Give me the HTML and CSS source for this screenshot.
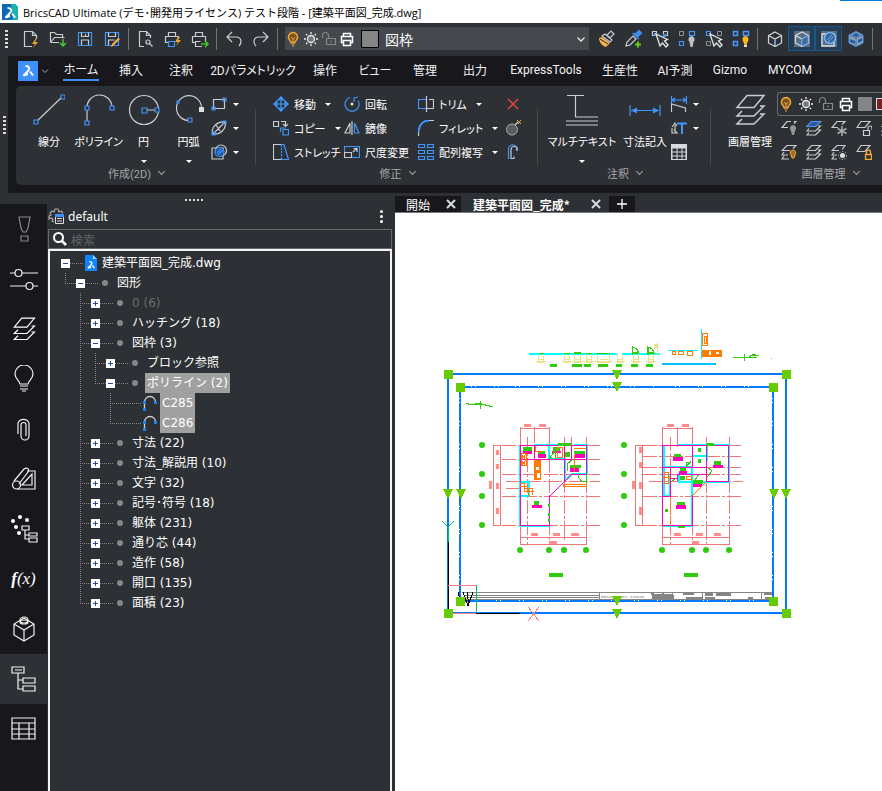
FILE: index.html
```html
<!DOCTYPE html>
<html lang="ja">
<head>
	<meta charset="UTF-8">
	<meta name="viewport" content="width=device-width, initial-scale=1.0">
	<title>BricsCAD Ultimate</title>
	<link rel="stylesheet" href="styles.css">
</head>
<body>
	<!-- 共通アイコン -->
	<svg class="defs" aria-hidden="true">
		<symbol id="bulb" viewBox="0 0 16 16"><path d="M8 1.5a4.6 4.6 0 0 0-3 8l1 2h4l1-2a4.6 4.6 0 0 0-3-8z" fill="#7b521c" stroke="#e8a33d" stroke-width="1.5"/><path d="M6 6l2 2 2-2M8 8v3M6 13h4M7 15h2" stroke="#e8a33d" fill="none"/></symbol>
		<symbol id="sun" viewBox="0 0 16 16"><circle cx="8" cy="8" r="3.5" fill="#777" stroke="#eee" stroke-width="1.3"/><path d="M8 1v2M8 13v2M1 8h2M13 8h2M3 3l1.4 1.4M11.6 11.6L13 13M3 13l1.4-1.4M11.6 4.4L13 3" stroke="#eee" stroke-width="1.3"/></symbol>
		<symbol id="lock" viewBox="0 0 16 16"><path d="M5.5 7.500h9v6h-9zM7.500 7V4.500a2.500 2.500 0 0 0-6 0V7M10 9.500v2" fill="none" stroke="#85878a" stroke-width="1.200"/></symbol>
		<symbol id="printer" viewBox="0 0 16 16"><path d="M4.500 5V2.500h7V5M4 11.500H2.500v-6h11v6H12M4.500 9.500h7v5h-7z" fill="none" stroke="#fff" stroke-width="1.500"/></symbol>
		<symbol id="poly" viewBox="0 0 16 16"><path d="M2.500 14V7a5 5 0 0 1 11 0" fill="none" stroke="#d0d0d2" stroke-width="1.300"/><path d="M1 6h3v3H1zM12 6h3v3h-3zM1 13h3v3H1z" fill="#1e80e8"/></symbol>
		<symbol id="cube" viewBox="0 0 16 16"><path d="M8 1l6.500 3.500v7.500L8 15.500 1.500 12V4.500zM1.500 4.500L8 8l6.500-3.500M8 8v7.500" fill="none" stroke="#d8d8da" stroke-width="1.200"/></symbol>
		<symbol id="layers" viewBox="0 0 32 32"><path d="M13 1.500h17l-10 12H3zM26 12h4L20 22H3l5-5M26 20h4L20 30H3l5-5" fill="none" stroke="currentColor" stroke-width="1.500"/></symbol>
		<symbol id="sheet" viewBox="0 0 16 16"><path d="M5 1.500h9l-5 6H1z" fill="none" stroke="#c9c9cc" stroke-width="1.200"/></symbol>
		<symbol id="sheets" viewBox="0 0 16 16"><path d="M5.500 1.500h9l-5 5H1zM12 6h2.500l-5 5H1l2-2.500M12 10h2.500l-5 5H1l2-2.500" fill="none" stroke="#c9c9cc" stroke-width="1.200"/></symbol>
		<symbol id="squares" viewBox="0 0 20 20"><path d="M2.500 2.500h4v4h-4zM12.500 2.500h5v4h-5zM2.500 12.500h4v4h-4z" fill="none" stroke="#4a98ff" stroke-width="1.500"/></symbol>
		<symbol id="pointer" viewBox="0 0 20 20"><path d="M6 5l4 12 2.500-3 3.500 4 2-2-3.500-4 3-1.500z" fill="#33363a" stroke="#e4e4e6" stroke-width="1.300"/></symbol>
		<symbol id="close" viewBox="0 0 12 12"><path d="M2 2l8 8M10 2l-8 8" stroke="#d5dbe2" stroke-width="2"/></symbol>
		<symbol id="mark" viewBox="0 0 12 12"><path d="M3.500 1c4 0 5 2.500 2.500 5L1.500 10.500 6 9" fill="none" stroke="#fff" stroke-width="2"/><path d="M8 6.500l3 4" stroke="#fff" stroke-width="2"/></symbol>
	</svg>

	<header class="titlebar">
		<svg class="app-icon" viewBox="0 0 16 16"><path d="M0 0h13l3 3v13H0z" fill="#0b67b8"/><path d="M9 0h4l3 3v13h-5z" fill="#18b4b0"/><use href="#mark" x="2" y="3" width="12" height="12"/></svg>
		<h1>BricsCAD Ultimate (デモ･開発用ライセンス) テスト段階 - [建築平面図_完成.dwg]</h1>
		<span class="accent"></span>
	</header>

	<div class="quickbar">
		<span class="grip-v"></span>
		<button class="qbtn" aria-label="新規"><svg viewBox="0 0 20 20"><path d="M11 17.500H3.500v-15h8l4 4V10M11.500 2.500v4h4" class="g"/><path d="M15 9l-4 6h3l-2 4 5-6h-3l2-4z" fill="#f3a02f"/></svg></button>
		<button class="qbtn" aria-label="開く"><svg viewBox="0 0 20 20"><path d="M3 13.500h8M2.500 13.500v-10h4l2 2h6v3h-8l-4 5M14.500 8.500h2" class="g"/><path d="M15 10v7M12 14l3 3 3-3" stroke="#43c832" fill="none" stroke-width="1.500"/></svg></button>
		<button class="qbtn" aria-label="保存"><svg viewBox="0 0 20 20"><path d="M3.500 3.500h13v13h-13z" class="b"/><path d="M6.500 3.500v4h7v-4M6.500 16v-5h7v5M10.500 5v2" class="g"/></svg></button>
		<button class="qbtn" aria-label="別名保存"><svg viewBox="0 0 20 20"><path d="M3.500 3.500h13v13h-13z" class="b"/><path d="M6.500 3.500v4h7v-4M6.500 16v-5h6" class="g"/><path d="M18 10l-7 7-2 1 1-3 6-6z" fill="#f4b455"/></svg></button>
		<span class="sep"></span>
		<button class="qbtn" aria-label="プレビュー"><svg viewBox="0 0 20 20"><path d="M8 17.500H3.500v-15h7l4 4V9M10.500 2.500v4h4" class="g"/><circle cx="12" cy="13" r="2" class="g"/><path d="M13.500 14.500l3 3" class="g"/></svg></button>
		<button class="qbtn" aria-label="印刷"><svg viewBox="0 0 20 20"><path d="M5.500 8V3.500h7V8M5 13.500H2.500v-6h13V10" class="g"/><path d="M5.500 12.500h6v5h-6z" class="b"/><path d="M15 8l-3 5h3l-2 4 5-6h-3l2-3z" fill="#f3a02f"/></svg></button>
		<button class="qbtn" aria-label="パブリッシュ"><svg viewBox="0 0 20 20"><path d="M5.500 8V3.500h7V8M5 13.500H2.500v-6h13V12M12 17.500H5.500v-5h5" class="g"/><path d="M11 15h7M15 12l3 3-3 3" stroke="#43c832" fill="none" stroke-width="1.500"/></svg></button>
		<span class="sep"></span>
		<button class="qbtn" aria-label="元に戻す"><svg viewBox="0 0 20 20"><path d="M8 3L3 8l5 5M3 8h9c6 0 6 6 3 9" class="g"/></svg></button>
		<button class="qbtn" aria-label="やり直し"><svg viewBox="0 0 20 20"><path d="M12 3l5 5-5 5M17 8H8c-6 0-6 6-3 9" class="g"/></svg></button>
		<span class="sep"></span>
		<div class="layer-combo">
			<svg><use href="#bulb"/></svg><svg><use href="#sun"/></svg><svg><use href="#lock"/></svg><svg><use href="#printer"/></svg>
			<span class="swatch"></span>
			<select aria-label="画層"><option>図枠</option></select>
			<svg class="chev" viewBox="0 0 16 16"><path d="M4.500 6.500L8 10l3.500-3.500" stroke="#e8e8e8" fill="none" stroke-width="1.300"/></svg>
		</div>
		<button class="qbtn" aria-label="プロパティコピー"><svg viewBox="0 0 20 20"><path d="M11 6l3 3 4-4-3-3zM9 5l7 6-2 2-8-6z" class="g"/><path d="M3 9l3-1 8 6-4 4c-4-1-7-5-7-9z" fill="#f5b04a"/><path d="M4 10l8 5" stroke="#2d3034"/></svg></button>
		<button class="qbtn" aria-label="スポイト"><svg viewBox="0 0 20 20"><path d="M3 17l1-4 6-6 3 3-6 6z" class="g"/><path d="M10 4l6 6M12 6l4-4 2 2-4 4z" stroke="#3d8cf0" fill="#3d8cf0" stroke-width="2"/><path d="M12 15.500h6M15 12.500v6" stroke="#5bcc12" stroke-width="2"/></svg></button>
		<button class="qbtn" aria-label="選択"><svg viewBox="0 0 20 20"><path d="M2.500 2.500h4v4h-4zM13.500 2.500h4v4h-4z" class="g"/><path d="M13 5h3v3h-3zM4 4h3v3H4z" fill="#3d8cf0"/><use href="#pointer"/></svg></button>
		<button class="qbtn" aria-label="選択表示"><svg viewBox="0 0 20 20"><path d="M2.500 2.500h4v4h-4z" stroke="#909195" fill="none"/><path d="M12.500 2.500h5v4h-5zM2.500 12.500h4v4h-4z" class="b"/><path d="M14.500 7a3.500 3.500 0 0 0-2 6l1 5h2l1-5a3.500 3.500 0 0 0-2-6z" fill="#bfc0c2"/></svg></button>
		<button class="qbtn" aria-label="選択分離"><svg viewBox="0 0 20 20"><path d="M2.500 2.500h4v4h-4z" class="b"/><path d="M13.500 2.500h4v4h-4zM2.500 12.500h4v4h-4z" stroke="#909195" fill="none"/><use href="#pointer"/></svg></button>
		<button class="qbtn" aria-label="全表示"><svg viewBox="0 0 20 20"><use href="#squares"/><path d="M14.500 7a3.500 3.500 0 0 0-2 6l1 3h2l1-3a3.500 3.500 0 0 0-2-6z" fill="#ffb81c"/><path d="M13 16h3v2h-3z" fill="#ddd"/></svg></button>
		<span class="sep"></span>
		<button class="qbtn view" aria-label="ワイヤフレーム"><svg viewBox="0 0 16 16"><use href="#cube"/><path d="M8 8v7" stroke="#4a98ff"/></svg></button>
		<button class="qbtn view on" aria-label="シェーディング"><svg viewBox="0 0 16 16"><rect width="16" height="16" fill="#587085"/><use href="#cube"/><path d="M8 8v7l6-3V5z" fill="#46688c" stroke="#4a98ff"/></svg></button>
		<button class="qbtn view on" aria-label="ハッチ表示"><svg viewBox="0 0 16 16"><rect width="16" height="16" fill="#587085"/><path d="M1 3h12v12H1z" fill="none" stroke="#ddd" stroke-width="1.300"/><circle cx="9" cy="7" r="5.500" fill="#386797" stroke="#78b4f4" stroke-width="1.500"/><path d="M6 9l5-5M7 11l5-5" stroke="#63a9f7"/></svg></button>
		<button class="qbtn view" aria-label="ソリッド"><svg viewBox="0 0 16 16"><path d="M8 .5l7 3.500v8l-7 3.500L1 12V4z" fill="#969ba1" stroke="#4a98ff"/><path d="M1 4l7 3 7-3M8 7v8" stroke="#337bd2" fill="none"/><path d="M4 4l4-2 4 2-4 2zM2 8l5 2v3l-5-2zM10 9l4-2v3l-4 2z" fill="#1e5fa8"/></svg></button>
		<span class="sep"></span>
	</div>

	<section class="ribbon">
		<div class="ribbon-edge"><span class="grip-v"></span></div>
		<div class="ribbon-main">
			<nav class="tabs">
				<button class="app-btn" aria-label="アプリケーション"><svg viewBox="0 0 20 20"><rect width="20" height="20" fill="#3f91ff"/><use href="#mark" x="4" y="4" width="12" height="12"/></svg><svg class="chev" viewBox="0 0 8 8"><path d="M1 2.500l3 3 3-3" stroke="#aaa" fill="none"/></svg></button>
				<a href="#" class="current">ホーム</a><a href="#">挿入</a><a href="#">注釈</a><a href="#">2Dパラメトリック</a><a href="#">操作</a><a href="#">ビュー</a><a href="#">管理</a><a href="#">出力</a><a href="#">ExpressTools</a><a href="#">生産性</a><a href="#">AI予測</a><a href="#">Gizmo</a><a href="#">MYCOM</a>
			</nav>
			<div class="panels">
				<div class="panel">
					<div class="tools draw">
						<button class="big"><svg viewBox="0 0 32 32"><path d="M3 28L29 3" class="g"/><path d="M1 26h4v4H1zM28 1h4v4h-4z" class="b k"/></svg><span>線分</span></button>
						<button class="big"><svg viewBox="0 0 32 32"><path d="M4 29V14a12 12 0 0 1 25-1" class="g"/><path d="M2 12h4v4H2zM2 27h4v4H2zM27 12h4v4h-4z" class="b k"/></svg><span>ポリライン</span></button>
						<button class="big"><svg viewBox="0 0 32 32"><circle cx="16" cy="16" r="14.500" class="g"/><path d="M16 16h14" class="g"/><path d="M14 14h5v5h-5zM27 14h4v4h-4z" class="b k"/></svg><span>円</span><i class="drop"></i></button>
						<button class="big"><svg viewBox="0 0 32 32"><path d="M17 26.500A12.500 12.500 0 1 1 28.500 14" class="g"/><path d="M15 24h4v4h-4zM4 7h2v2H4z" class="b k"/><path d="M26 13h5v5h-5z" fill="#e0e0e0"/></svg><span>円弧</span><i class="drop"></i></button>
						<div class="stack">
							<button class="small" aria-label="矩形"><svg viewBox="0 0 16 16"><path d="M2.500 3.500h11v9h-11z" class="g"/><path d="M1 11h3v3H1zM12 2h3v3h-3z" class="b"/></svg><i class="drop"></i></button>
							<button class="small" aria-label="楕円"><svg viewBox="0 0 16 16"><path d="M2 14C-1 7 7 1 14 2c2 7-5 13-12 12zL14 2M5 5l4 6" class="g"/><path d="M1 12h3v3H1zM12 1h3v3h-3z" class="b"/></svg><i class="drop"></i></button>
							<button class="small" aria-label="ハッチング"><svg viewBox="0 0 16 16"><path d="M1 4h11v11H1z" class="g"/><circle cx="10" cy="6.500" r="5.500" class="g"/><circle cx="8.500" cy="8" r="4.500" class="b hatch"/><path d="M6 9l4-4M7 11l5-5" class="b"/></svg><i class="drop"></i></button>
						</div>
					</div>
					<button class="caption">作成(2D)<i class="caret"></i></button>
				</div>

				<div class="panel">
					<div class="tools modify">
						<button class="small"><svg viewBox="0 0 16 16"><path d="M8 0v16M0 8h16M8 1L5 4h6zM8 15l-3-3h6zM1 8l3-3v6zM15 8l-3-3v6z" class="b"/></svg>移動<i class="drop"></i></button>
						<button class="small"><svg viewBox="0 0 16 16"><path d="M6 1.500a7 7 0 1 0 8 3" class="b"/><path d="M14 1l-4 1v4" class="b"/><circle cx="8" cy="8" r="1.500" fill="#ddd"/></svg>回転</button>
						<button class="small"><svg viewBox="0 0 16 16"><path d="M8 3.500H.5v9H8" class="b"/><path d="M8.500 0v16M11 3.500h4.500v9H9" class="g"/></svg>トリム<i class="drop"></i></button>
						<button class="small" aria-label="削除"><svg viewBox="0 0 16 16"><path d="M3 3l10 10M13 3L3 13" stroke="#e0493f" stroke-width="1.500"/></svg></button>
						<button class="small"><svg viewBox="0 0 16 16"><path d="M.5 1.500h5v5h-5zM8 1.500h4.500V6M10 4l2.500 2.500L15 4" class="g"/><path d="M10 9.500h5.500v5.500H10zM7.500 12v-4h5" class="b"/></svg>コピー<i class="drop"></i></button>
						<button class="small"><svg viewBox="0 0 16 16"><path d="M6 3v10H1zM8 1v14" class="g"/><path d="M10.500 3v10H15z" class="b"/></svg>鏡像</button>
						<button class="small"><svg viewBox="0 0 16 16"><path d="M.5 16v-4M11 .5h5" class="g"/><path d="M.5 12C1 5 5 .5 11 .5" class="b fat"/></svg>フィレット<i class="drop"></i></button>
						<button class="small" aria-label="分解"><svg viewBox="0 0 16 16"><circle cx="7" cy="9.500" r="5.500" fill="#5b5d60" stroke="#aaa"/><path d="M10 5l3-3" class="g"/><path d="M12 0l4 4M16 0l-3 4" stroke="#e8a33d"/></svg></button>
						<button class="small"><svg viewBox="0 0 16 16"><path d="M8 .5H.5v15H8" class="g"/><path d="M8 .5h3l4.500 15H8" class="b"/><path d="M8.500 1v14" class="b" stroke-dasharray="2 1"/></svg>ストレッチ</button>
						<button class="small"><svg viewBox="0 0 16 16"><path d="M.5 8V2.500h15v11H8" class="b"/><path d="M.5 8.500h7v5h-7zM9 8l4-4M9.500 4.500H13V8" class="g"/></svg>尺度変更</button>
						<button class="small"><svg viewBox="0 0 16 16"><path d="M.5.5h6v3h-6zM9.500.5h6v3h-6zM.5 6.500h6v3h-6zM9.500 6.500h6v3h-6zM.5 12.500h6v3h-6zM9.500 12.500h6v3h-6z" class="b"/></svg>配列複写<i class="drop"></i></button>
						<button class="small" aria-label="オフセット"><svg viewBox="0 0 16 16"><path d="M3.500 15V5a4.500 4.500 0 0 1 9 1" class="b"/><path d="M12 7V5.500a3 3 0 0 0-6 0v9h3v-2" class="g"/></svg></button>
					</div>
					<button class="caption">修正<i class="caret"></i></button>
				</div>

				<div class="panel">
					<div class="tools annotate">
						<button class="big"><svg viewBox="0 0 32 32"><path d="M1 1.500h17M9.500 2v21H32M0 27h32M0 31h32" class="g"/></svg><span>マルチテキスト</span><i class="drop"></i></button>
						<button class="big"><svg viewBox="0 0 32 32"><path d="M1 11v11M31 11v11M2 16.500h28" class="b"/><path d="M2 16.500l6-3v6zM30 16.500l-6-3v6z" fill="#4096ff"/></svg><span>寸法記入</span></button>
						<div class="stack">
							<button class="small" aria-label="寸法"><svg viewBox="0 0 16 16"><path d="M.5 0v8M15.500 0v8M1 4h14M4 2L1 4l3 2M12 2l3 2-3 2" class="b"/><path d="M.5 16V8l14 4v4" class="g"/></svg><i class="drop"></i></button>
							<button class="small" aria-label="文字"><svg viewBox="0 0 16 16"><path d="M6 3.500h10M11 4v10" class="b fat"/><path d="M1 7l3-4 2 3M1 8v5h5l-3-3M4 5v7" class="g"/></svg><i class="drop"></i></button>
							<button class="small" aria-label="表"><svg viewBox="0 0 16 16"><path d="M0 0h16v16H0z" fill="#d3d9df"/><path d="M1.500 4.500h4v3h-4zM6.500 4.500h4v3h-4zM11.500 4.500h3v3h-3zM1.500 8.500h4v3h-4zM6.500 8.500h4v3h-4zM11.500 8.500h3v3h-3zM1.500 12.500h4v2.500h-4zM6.500 12.500h4v2.500h-4zM11.500 12.500h3v2.500h-3z" fill="#2d3034"/></svg></button>
						</div>
					</div>
					<button class="caption">注釈<i class="caret"></i></button>
				</div>

				<div class="panel">
					<div class="tools layer">
						<button class="big"><svg><use href="#layers"/></svg><span>画層管理</span></button>
						<div class="layer-side">
							<div class="mini-combo"><svg><use href="#bulb"/></svg><svg><use href="#sun"/></svg><svg><use href="#lock"/></svg><svg><use href="#printer"/></svg><span class="fill"></span><span class="red"></span></div>
							<div class="layer-row">
								<button aria-label="画層オフ"><svg viewBox="0 0 16 16"><path d="M10 1.500H6l-5 6h6M13 1.500h2l-2 2" class="g"/><path d="M12 5a3.500 3.500 0 0 0-2 6l1 4h2l1-4a3.500 3.500 0 0 0-2-6z" fill="#939598"/></svg></button>
								<button aria-label="現在画層"><svg viewBox="0 0 16 16"><use href="#sheets"/><path d="M5.500 1.500h9l-5 5H1z" fill="#245c9e" stroke="#4a98ff"/></svg></button>
								<button aria-label="フリーズ"><svg viewBox="0 0 16 16"><path d="M7 7.500H1l5-6h8l-3 3" class="g"/><path d="M11 6v10M6.500 8.500l9 5M15.500 8.500l-9 5" stroke="#aaa" stroke-width="1.500"/></svg></button>
								<button aria-label="ロック解除"><svg viewBox="0 0 16 16"><use href="#sheet"/><path d="M7.500 10.500h6v5h-6zM12 10V8a2 2 0 0 1 4 0v2" class="g"/></svg></button>
								<button aria-label="画層"><svg><use href="#sheets"/></svg></button>
							</div>
							<div class="layer-row">
								<button aria-label="全画層オン"><svg viewBox="0 0 16 16"><path d="M9 6.500H1l5-5h9l-3 3M3 8l-2 3h6M3 12l-2 3h7" class="g"/><path d="M12 6a3 3 0 0 0-2 5l1 3h2l1-3a3 3 0 0 0-2-5z" fill="#a36d1f" stroke="#f3a839"/></svg></button>
								<button aria-label="分離"><svg><use href="#sheets"/></svg></button>
								<button aria-label="フリーズ解除"><svg viewBox="0 0 16 16"><path d="M8 6.500H1l5-5h8l-3 4M3 8l-2 3h5M3 12l-2 3h5" class="g"/><circle cx="11.500" cy="11.500" r="2.500" fill="#ddd"/><circle cx="11.500" cy="11.500" r="4" fill="none" stroke="#ddd" stroke-dasharray="1 2"/></svg></button>
								<button aria-label="ロック"><svg viewBox="0 0 16 16"><use href="#sheet"/><path d="M9.500 10.500h6v5h-6zM10.500 10V8a2 2 0 0 1 4 0v2" stroke="#f3a839" stroke-width="1.300" fill="none"/></svg></button>
							</div>
						</div>
					</div>
					<button class="caption">画層管理<i class="caret"></i></button>
				</div>
			</div>
		</div>
	</section>

	<main class="work">
		<nav class="side">
			<button aria-label="情報"><svg viewBox="0 0 28 28" class="dim"><path d="M9 2h11l-2 11-2 4h-3l-2-4zM11 21h7v5h-7z"/></svg></button>
			<button aria-label="プロパティ"><svg viewBox="0 0 28 28"><path d="M0 8h5M12 8h16M0 21h16M23 21h5"/><circle cx="8.500" cy="8" r="3.500"/><circle cx="19.500" cy="21" r="3.500"/></svg></button>
			<button aria-label="画層"><svg class="s24"><use href="#layers"/></svg></button>
			<button aria-label="ヒント"><svg viewBox="0 0 28 28"><path d="M10 19c0-3-5-5-5-10a9 9 0 0 1 18 0c0 5-5 7-5 10zM10 21h8M10 24h8M12 26h4"/></svg></button>
			<button aria-label="添付"><svg viewBox="0 0 28 28"><path d="M8 19V8a6 6 0 0 1 11 0v13a4 4 0 0 1-8 0V10a2 2 0 0 1 5 0v11"/></svg></button>
			<button aria-label="シート"><svg viewBox="0 0 28 28"><path d="M4 16L14 4c3-2 6 0 4 3L9 19M17 6h8v18H7M12 20h10V9z"/><circle cx="6.500" cy="20" r="4"/></svg></button>
			<button aria-label="構造"><svg viewBox="0 0 28 28"><path d="M12 11h7v4h-7zM15 15v9h4M15 20h4M19 18h8v3h-8zM19 23h8v4h-8z"/><g fill="#fff" stroke="none"><circle cx="10" cy="2" r="2"/><circle cx="3" cy="6" r="2"/><circle cx="17" cy="5" r="2"/><circle cx="6" cy="12" r="2"/><circle cx="9" cy="18" r="2"/></g></svg></button>
			<button class="fx"><b>f</b>(x)</button>
			<button aria-label="コンポーネント"><svg viewBox="0 0 28 28"><path d="M14 3l10 6v11l-10 6-10-6V9zM4 9l10 6 10-6M14 15v11"/><ellipse cx="14" cy="5" rx="4" ry="3"/><ellipse cx="14" cy="7" rx="4" ry="2"/></svg></button>
			<button class="active" aria-label="構造ブラウザ"><svg viewBox="0 0 28 28"><path d="M2 2h12v6H2zM5 5h7M8 8v16h5M8 15h5M13 13h12v5H13zM13 21h12v5H13z"/></svg></button>
			<button aria-label="表"><svg viewBox="0 0 28 28"><path d="M2 3h23v21H2zM2 8h23M2 14h23M2 19h23M9 8v16M19 8v16"/></svg></button>
		</nav>

		<aside class="explorer">
			<span class="grip-h"></span>
			<div class="explorer-head">
				<svg viewBox="0 0 16 16"><path d="M6 14l-2-1 1-2-2-1-2 1v-3l2-1-1-2 2-2 2 1 1-3h3l1 3 2-1 2 2" fill="none" stroke="#aaa" stroke-width="1.200"/><path d="M7.500 7.500h8v8h-8zM9 10.500h5M9 13h5" fill="none" stroke="#ddd"/><path d="M7 6h9v3H7z" fill="#3f91ff"/></svg>
				<h2>default</h2>
				<button class="dots" aria-label="メニュー"><i></i><i></i><i></i></button>
			</div>
			<label class="search">
				<svg viewBox="0 0 16 16"><circle cx="6.500" cy="6.500" r="4.500" fill="none" stroke="#fff" stroke-width="2"/><path d="M10 10l4 4" stroke="#fff" stroke-width="2.500"/></svg>
				<input type="text" placeholder="検索" aria-label="検索">
			</label>
			<ul class="tree">
				<li>
					<div class="row"><button class="toggle open" aria-label="折りたたむ"></button><i class="line"></i><svg class="file" viewBox="0 0 12 16"><path d="M0 0h8l4 4v12H0z" fill="#0f84ff"/><path d="M8 0v4h4z" fill="#9bd0ff"/><use href="#mark" x="2" y="6" width="8" height="8"/></svg><span class="label">建築平面図_完成.dwg</span></div>
					<ul>
						<li>
							<div class="row"><i class="stub"></i><button class="toggle open" aria-label="折りたたむ"></button><i class="line"></i><i class="dot"></i><span class="label">図形</span></div>
							<ul>
								<li><div class="row"><i class="stub"></i><button class="toggle" aria-label="展開"></button><i class="line"></i><i class="dot"></i><span class="label off">0 (6)</span></div></li>
								<li><div class="row"><i class="stub"></i><button class="toggle" aria-label="展開"></button><i class="line"></i><i class="dot"></i><span class="label">ハッチング (18)</span></div></li>
								<li>
									<div class="row"><i class="stub"></i><button class="toggle open" aria-label="折りたたむ"></button><i class="line"></i><i class="dot"></i><span class="label">図枠 (3)</span></div>
									<ul>
										<li><div class="row"><i class="stub"></i><button class="toggle" aria-label="展開"></button><i class="line"></i><i class="dot"></i><span class="label">ブロック参照</span></div></li>
										<li>
											<div class="row"><i class="stub"></i><button class="toggle open" aria-label="折りたたむ"></button><i class="line"></i><i class="dot"></i><span class="label sel">ポリライン (2)</span></div>
											<ul>
												<li><div class="row"><i class="stub leaf"></i><svg class="item"><use href="#poly"/></svg><span class="label sel">C285</span></div></li>
												<li><div class="row"><i class="stub leaf"></i><svg class="item"><use href="#poly"/></svg><span class="label sel">C286</span></div></li>
											</ul>
										</li>
									</ul>
								</li>
								<li><div class="row"><i class="stub"></i><button class="toggle" aria-label="展開"></button><i class="line"></i><i class="dot"></i><span class="label">寸法 (22)</span></div></li>
								<li><div class="row"><i class="stub"></i><button class="toggle" aria-label="展開"></button><i class="line"></i><i class="dot"></i><span class="label">寸法_解説用 (10)</span></div></li>
								<li><div class="row"><i class="stub"></i><button class="toggle" aria-label="展開"></button><i class="line"></i><i class="dot"></i><span class="label">文字 (32)</span></div></li>
								<li><div class="row"><i class="stub"></i><button class="toggle" aria-label="展開"></button><i class="line"></i><i class="dot"></i><span class="label">記号･符号 (18)</span></div></li>
								<li><div class="row"><i class="stub"></i><button class="toggle" aria-label="展開"></button><i class="line"></i><i class="dot"></i><span class="label">躯体 (231)</span></div></li>
								<li><div class="row"><i class="stub"></i><button class="toggle" aria-label="展開"></button><i class="line"></i><i class="dot"></i><span class="label">通り芯 (44)</span></div></li>
								<li><div class="row"><i class="stub"></i><button class="toggle" aria-label="展開"></button><i class="line"></i><i class="dot"></i><span class="label">造作 (58)</span></div></li>
								<li><div class="row"><i class="stub"></i><button class="toggle" aria-label="展開"></button><i class="line"></i><i class="dot"></i><span class="label">開口 (135)</span></div></li>
								<li><div class="row"><i class="stub"></i><button class="toggle" aria-label="展開"></button><i class="line"></i><i class="dot"></i><span class="label">面積 (23)</span></div></li>
							</ul>
						</li>
					</ul>
				</li>
			</ul>
		</aside>

		<section class="document">
			<div class="doc-tabs">
				<button class="doc-tab">開始<svg><use href="#close"/></svg></button>
				<button class="doc-tab current">建築平面図_完成*<svg><use href="#close"/></svg></button>
				<button class="doc-tab add" aria-label="新規図面"><svg viewBox="0 0 12 12"><path d="M6 1v10M1 6h10" stroke="#fff" stroke-width="1.300"/></svg></button>
			</div>
			<div class="canvas">
				<svg class="drawing" viewBox="395 213 487 578" shape-rendering="crispEdges">
					<!-- 建具・設備 -->
					<path d="M529 354h88M622 354h38" stroke="#0ff" stroke-width="2"/>
					<path d="M668 350.500h30M701.500 329v30" stroke="#19eaff"/>
					<path d="M662 364h54" stroke="#00bfff" stroke-width="2"/>
					<g fill="none" stroke="#e6e388">
						<path d="M538.500 354v8h5v-8M536 361.500h10M539 359.500h5M564.500 354v8h5v-8M562 361.500h10M564 359.500h6M574.500 354v8h6v-8M572 361.500h12M575 359.500h6M586.500 354v8h5v-8M584 361.500h10M586 359.500h6M597.500 354v8h12v-8M595 361.500h17M600 359.500h8M617.500 354v8h5v-8M615 361.500h10M617 359.500h6M633.500 354v8h5v-8M631 361.500h10M633 359.500h6M648.500 354v8h5v-8M646 361.500h10M648 359.500h6M657.500 343v12"/>
					</g>
					<path d="M654 344h4v4h-4z" fill="#e6e388"/>
					<g fill="#2fcb0d">
						<path d="M550 364h7v3h-7zM572 364h10v3h-10zM584 364h7v3h-7zM598 364h10v3h-10zM616 364h6v3h-6zM631 364h7v3h-7zM646 364h7v3h-7zM574 352h7v2h-7z"/>
					</g>
					<path d="M539 353.500h5M564 353.500h6M586 353.500h6M597 353.500h13M632.500 355v-8q5 1 6 6h-6M648 355v-8q5 1 6 6h-6M733 357.500h24M744.500 354v7M749 357l3-2h3l4 1" fill="none" stroke="#2fcb0d" stroke-width="1.200"/>
					<path d="M702.500 333.500h5v12h-5zM704.500 336.500h2v7h-2zM672.500 351.500h3v3h-3zM678.500 351.500h5v3h-5zM687.500 351.500h5v4h-5z" fill="none" stroke="#ff7a00"/>
					<path d="M702 350h20v7h-20z" fill="#ff7a00"/>
					<path d="M709 351h2v4h-2zM716 352h3v2h-3z" fill="#fff"/>
					<path d="M466 403l5 2 5-1h5l12 3M480.500 401v8" fill="none" stroke="#2fcb0d" stroke-width="1.200"/>
					<path d="M771 358h1v1h-1z" fill="#d8b400"/>

					<!-- 図枠 -->
					<g fill="none" stroke="#007bff" stroke-width="2">
						<path d="M448 374h338v239H448zM460 387h313v214H460z"/>
					</g>
					<path d="M471 386.500h28M515 386.500h140M675 386.500h80M459.500 398v90M459.500 506v88M772.500 398v90M772.500 506v88M496 600.500h270" stroke="#fff" stroke-dasharray="1 3 1 18" fill="none"/>

					<!-- 平面図 1 -->
					<g fill="none" stroke="#ef7777">
						<path d="M520.500 427v118M549.500 427v10M534.500 427v16M520 428.500h30M493.500 445v81M500.500 445v81M493 445.500h8M493 525.500h8M520 537.500h67M520 544.500h67M586.500 530v15M564.500 530v8"/>
						<path d="M502 445.500h98M502 459.500h98M502 474.500h98M506 481.500h94M506 488.500h14M502 496.500h98M502 525.500h98M527.500 437v108M549.500 437v108M564.500 437v103M571.500 437v20M586.500 437v108" stroke-dasharray="14 2 3 2"/>
					</g>
					<path d="M524 424h7v3h-7zM539 424h7v3h-7zM496 450h3v5h-3zM496 464h3v5h-3zM489 481h3v8h-3zM496 483h3v6h-3zM496 508h3v6h-3zM531 533h7v3h-7zM553 533h7v3h-7zM571 533h8v3h-8zM549 541h8v3h-8z" fill="#ff8c8c"/>
					<path d="M519.500 526v-81M534 444.500h24M574 444.500h13v29h-15l-5 6M519 526h30M549 445v14h16v22" fill="none" stroke="#0ff" stroke-width="2"/>
					<path d="M520 482h9v14h-9" fill="none" stroke="#0ff" stroke-width="2"/>
					<path d="M520.500 445.500h66v29h-15l-22 22v29h-29zM521 459.500h65M534.500 446v13M564.500 446v35M571.500 446v13" fill="none" stroke="#f0b"/>
					<g fill="#2fcb0d">
						<path d="M523 447h9v4h-9zM538 451h7v3h-7zM553 447h7v4h-7zM565 452h5v5h-5zM574 451h11v3h-11zM570 465h11v3h-11zM534 501h5v4h-5zM558 443h13v3h-13z"/>
						<path d="M548 504h2v3h-2zM548 513h2v3h-2zM548 519h2v3h-2z"/>
					</g>
					<path d="M523 451h9v3h-9zM538 454h8v4h-8zM552 451h9v2h-9zM575 454h10v4h-10zM570 468h9v4h-9zM532 505h10v3h-10z" fill="#f0b"/>
					<path d="M549 459l6-8v8M549 455l5 5M567 471v-7l6-5M578 474q1 8 8 8v-8" fill="none" stroke="#2fcb0d"/>
					<path d="M534 460h7v20h-7z" fill="#ff7a00"/>
					<path d="M536 467h3v3h-3zM537 473h3v5h-3z" fill="#fff"/>
					<path d="M521.500 453.500h5v12h-5zM521 454l5 6M526 454l-5 6M521 466l5-6M521 460l5 6M557.500 447.500h5v10h-5zM574 448.500h12M535.500 446v5h6M574.500 455v17M563.500 484.500h23v2h-23zM520 483.500h4v8h10M524 488.500h8v6M528.500 488v9M520 486.500h8" fill="none" stroke="#ff7a00"/>

					<!-- 平面図 2 -->
					<g fill="none" stroke="#ef7777">
						<path d="M662.500 427v118M677.500 427v20M692.500 427v20M662 428.500h31M635.500 445v81M642.500 445v81M635 445.500h8M635 525.500h8M662 537.500h68M662 544.500h68M729.500 530v15M706.500 530v8"/>
						<path d="M643 445.500h100M643 456.500h100M643 467.500h100M643 474.500h100M649 481.500h94M643 496.500h100M643 525.500h100M670.500 437v108M692.500 437v108M706.500 437v108M729.500 437v108" stroke-dasharray="14 2 3 2"/>
					</g>
					<path d="M667 424h7v3h-7zM682 424h7v3h-7zM639 447h3v6h-3zM639 462h3v6h-3zM632 481h3v8h-3zM639 482h3v7h-3zM639 507h3v8h-3zM674 533h7v3h-7zM696 533h7v3h-7zM714 533h7v3h-7zM692 541h7v3h-7z" fill="#ff8c8c"/>
					<path d="M677 444.500h52v37h-50v-8h13M664 446v50h6v-22M663 466.500h29M693 456h13M707 446v15M663 526h29v-60" fill="none" stroke="#0ff" stroke-width="2"/>
					<path d="M662.500 445.500h66v36h-22l-14 14v30h-30zM663 467.500h44M692.500 446v22M706.500 446v35M670.500 467v29h-8M677.500 481v-7h30M670 478.500h7" fill="none" stroke="#f0b"/>
					<g fill="#2fcb0d">
						<path d="M674 454h7v3h-7zM698 448h3v4h-3zM698 459h3v4h-3zM714 461h7v4h-7zM680 468h6v3h-6zM680 476h5v4h-5zM693 480h10v4h-10zM677 502h8v4h-8zM665 509h3v3h-3zM707 443h7v3h-7zM678 526h7v2h-7z"/>
					</g>
					<path d="M673 457h10v4h-10zM713 465h10v3h-10zM679 471h8v4h-8zM693 484h9v3h-9zM676 505h10v4h-10z" fill="#f0b"/>
					<path d="M686 467v-5h5M691 461l-5 6M707 467l5 4-5 6M695 480l4-6M671 482l5-4" fill="none" stroke="#2fcb0d"/>
					<path d="M693 495l13-13" stroke="#ff7a00"/>
					<path d="M670.500 498v28" stroke="#ff7a00" stroke-dasharray="2 1"/>
					<path d="M664.500 472.500h4v11h-4zM662 477.500h9M686.500 476.500h5v3h-5z" fill="none" stroke="#ff7a00"/>

					<!-- 通り芯記号 -->
					<g fill="#2fcb0d" shape-rendering="auto">
						<circle cx="482" cy="445" r="3"/><circle cx="482" cy="474" r="3"/><circle cx="482" cy="496" r="3"/><circle cx="482" cy="525" r="3"/>
						<circle cx="520" cy="550" r="3"/><circle cx="549" cy="550" r="3"/><circle cx="564" cy="550" r="3"/><circle cx="586" cy="550" r="3"/>
						<circle cx="624" cy="445" r="3"/><circle cx="624" cy="474" r="3"/><circle cx="624" cy="496" r="3"/><circle cx="624" cy="525" r="3"/>
						<circle cx="662" cy="550" r="3"/><circle cx="692" cy="550" r="3"/><circle cx="706" cy="550" r="3"/><circle cx="729" cy="550" r="3"/>
						<path d="M549 573h14v4h-14zM684 573h14v4h-14z"/>
					</g>

					<!-- 表題欄 -->
					<path d="M462 592.500h137M465 595.500h134M465 597.500h134M462 599.500h137M599.500 592v8M599 592.500h173M599 599.500h173" stroke="#858585"/>
					<path d="M651 592h22v3h-22zM652 595h22v5h-22zM683 593h11v2h-11zM686 597h16v3h-16zM705 593h8v3h-8zM716 593h15v3h-15zM705 597h10v3h-10zM748 597h5v3h-5zM764 593h8v2h-8zM765 597h7v3h-7zM702 592h1v8h-1zM761 592h1v8h-1z" fill="#858585"/>
					<path d="M654 593h8v1h-8zM664 593h8v1h-8z" fill="#fff"/>
					<text x="601" y="598" class="credit">BRICS WORKS STUDIO</text>

					<!-- UCSアイコン -->
					<g fill="none">
						<path d="M448 542v68" stroke="#000"/>
						<path d="M448 527v15M442 521l6 6 6-6M476.500 585v29" stroke="#00c060"/>
						<path d="M448 585.500h28M448 613.500h29M528 607l11 14M539 607l-11 14" stroke="#ff8080"/>
						<path d="M476 613.500h44" stroke="#000"/>
						<path d="M458 592l4 14M463 592l5 14 5-14M467 592l2 14" stroke="#000"/>
					</g>

					<!-- グリップ -->
					<g fill="#6c0">
						<path d="M444 370h9v9h-9zM782 370h9v9h-9zM444 609h9v9h-9zM782 609h9v9h-9zM456 383h9v9h-9zM769 383h9v9h-9zM456 597h9v9h-9zM769 597h9v9h-9z"/>
						<path d="M612 370h10l-5 10zM612 382h10l-5 10zM612 596h10l-5 10zM612 609h10l-5 10zM443 489h10l-5 10zM456 489h10l-5 10zM769 489h10l-5 10zM781 489h10l-5 10z"/>
					</g>
				</svg>
			</div>
		</section>
	</main>
</body>
</html>
```
FILE: styles.css
```css
* {
	box-sizing: border-box;
}
body {
	margin: 0;
	height: 100vh;
	display: flex;
	flex-direction: column;
	overflow: hidden;
	background: #2d3034;
	color: #fff;
	font: 12px Roboto, "Noto Sans CJK JP", sans-serif;
	font-feature-settings: "palt";
}
button {
	padding: 0;
	border: 0;
	background: none;
	color: inherit;
	font: inherit;
	font-feature-settings: inherit;
	white-space: nowrap;
}
svg {
	flex: none;
	width: 16px;
	height: 16px;
}
ul {
	margin: 0;
	padding: 0;
	list-style: none;
}
.defs {
	display: none;
}
.g {
	fill: none;
	stroke: #c9cdd2;
	stroke-width: 1.2;
}
.b {
	fill: none;
	stroke: #4096ff;
	stroke-width: 1.2;
}
.b.k {
	fill: #2d3034;
}
.b.fat {
	stroke-width: 2;
}
.b.hatch {
	fill: #204d87;
}

/* タイトルバー */
.titlebar {
	flex: none;
	display: flex;
	align-items: center;
	gap: 5px;
	height: 23px;
	padding-left: 2px;
	background: #fff;
	color: #000;
}
.titlebar h1 {
	flex: 1;
	margin: 0;
	font: 11px "Open Sans", "Noto Sans CJK JP", sans-serif;
	white-space: nowrap;
}
.accent {
	align-self: flex-start;
	width: 42px;
	height: 1px;
	background: #0078d7;
}

/* クイックアクセス */
.quickbar {
	flex: none;
	display: flex;
	align-items: center;
	height: 33px;
	padding: 0 6px 2px 5px;
}
.grip-v {
	width: 3px;
	height: 18px;
	background: repeating-linear-gradient(#ddd 0 2px, transparent 2px 4px);
}
.quickbar .grip-v {
	margin-right: 9px;
}
.qbtn {
	flex: none;
	display: flex;
	align-items: center;
	justify-content: center;
	width: 27px;
	height: 25px;
	border: 1px solid transparent;
}
.qbtn svg {
	width: 20px;
	height: 20px;
}
.qbtn.view svg {
	width: 16px;
	height: 16px;
}
.qbtn.on {
	background: #243c54;
	border-color: #19568c;
}
.sep {
	flex: none;
	width: 1px;
	height: 22px;
	margin: 0 3px;
	background: #707276;
}
.layer-combo {
	flex: 1;
	display: flex;
	align-items: center;
	gap: 2px;
	height: 23px;
	margin: 0 3px 0 4px;
	background: #45484c;
}
.swatch {
	width: 18px;
	height: 18px;
	margin: 0 4px;
	background: #858585;
	border: 1px solid #000;
}
.layer-combo select {
	flex: 1;
	appearance: none;
	padding: 0;
	border: 0;
	background: none;
	color: #fff;
	font: 14px "Noto Sans CJK JP", sans-serif;
}

/* リボン */
.ribbon {
	flex: none;
	display: flex;
}
.ribbon-edge {
	display: flex;
	align-items: center;
	justify-content: center;
	width: 8px;
}
.ribbon-main {
	flex: 1;
	min-width: 0;
	padding-bottom: 8px;
	background: #17171c;
}
.tabs {
	display: grid;
	grid-template-columns: 48px 50px 50px 50px 94px 50px 50px 50px 50px 92px 56px 54px 56px 64px;
	height: 30px;
}
.tabs a {
	display: flex;
	align-items: center;
	justify-content: center;
	height: 27px;
	color: #f2f2f2;
	text-decoration: none;
	white-space: nowrap;
}
.tabs a.current {
	margin: 0 7px;
	height: 25px;
	padding-top: 2px;
	border-bottom: 2px solid #3f91ff;
}
.app-btn {
	display: flex;
	align-items: center;
	gap: 3px;
	padding-left: 10px;
}
.app-btn svg {
	width: 20px;
	height: 20px;
}
.app-btn .chev {
	width: 8px;
	height: 8px;
}
.panels {
	display: flex;
	margin-left: 8px;
	height: 99px;
	background: #2d3034;
	border-radius: 5px 0 0 5px;
	overflow: hidden;
}
.panel {
	flex: none;
	display: flex;
	flex-direction: column;
	padding: 6px 0 4px;
	background: linear-gradient(#484a4d, #484a4d) right 23px / 1px 56px no-repeat;
}
.panel:last-child {
	background: none;
}
.tools {
	display: grid;
	height: 72px;
	font-size: 11px;
}
.caption {
	display: flex;
	align-items: center;
	justify-content: center;
	gap: 8px;
	height: 19px;
	color: #a4a6a9;
	font-size: 11px;
}
.caret {
	width: 5px;
	height: 5px;
	margin-top: -3px;
	border: solid #a4a6a9;
	border-width: 0 1px 1px 0;
	transform: rotate(45deg);
}
.drop {
	border: 3px solid transparent;
	border-top-color: #fff;
	border-bottom: 0;
}
.big {
	display: flex;
	flex-direction: column;
	align-items: center;
	gap: 8px;
	padding-top: 2px;
}
.big svg {
	width: 32px;
	height: 32px;
}
.big span {
	line-height: 18px;
}
.small {
	display: flex;
	align-items: center;
	gap: 5px;
	height: 24px;
}
.small .drop {
	margin-left: 4px;
}
.stack .small {
	gap: 2px;
}
.draw {
	grid-template-columns: 54px 45px 45px 45px 32px;
	padding: 0 13px 0 6px;
}
.modify {
	grid-template-columns: 71px 74px 87px 16px;
	padding: 0 17px;
}
.annotate {
	grid-template-columns: 78px 48px 30px;
	padding: 0 12px 0 5px;
}
.annotate .stack {
	padding-left: 2px;
}
.layer {
	grid-template-columns: 50px 172px;
	gap: 2px;
	padding: 0 0 0 14px;
	color: #c9cdd2;
}
.layer .big span {
	color: #fff;
}
.mini-combo {
	display: flex;
	align-items: center;
	gap: 4px;
	height: 24px;
	border: 1px solid #6a6c70;
	border-right: 0;
	border-radius: 3px 0 0 3px;
}
.mini-combo .fill {
	width: 14px;
	height: 14px;
	background: #858585;
}
.mini-combo .red {
	width: 8px;
	height: 12px;
	border: 1px solid #ddd;
	background: #722;
}
.layer-row {
	display: flex;
	gap: 9px;
	height: 24px;
	padding-left: 4px;
}
.layer-row button {
	display: flex;
	align-items: center;
}

/* 作業領域 */
.work {
	flex: 1;
	display: flex;
	min-height: 0;
}
.side {
	flex: none;
	width: 47px;
	margin-top: 11px;
	background: #18181c;
}
.side button {
	display: flex;
	align-items: center;
	justify-content: center;
	width: 100%;
	height: 50px;
}
.side svg {
	width: 28px;
	height: 28px;
	fill: none;
	stroke: #f0f0f0;
	stroke-width: 1.2;
}
.side .dim {
	stroke: #85878a;
}
.side .s24 {
	width: 24px;
	height: 24px;
}
.side .active {
	background: #2d3034;
}
.side .fx {
	font: italic 17px "Liberation Serif", serif;
}
.explorer {
	flex: none;
	display: flex;
	flex-direction: column;
	width: 345px;
	padding-left: 1px;
}
.grip-h {
	align-self: center;
	width: 18px;
	height: 2px;
	margin: 6px 52px 4px 0;
	background: repeating-linear-gradient(90deg, #ddd 0 2px, transparent 2px 4px);
}
.explorer-head {
	display: flex;
	align-items: center;
	gap: 4px;
	height: 22px;
	margin-bottom: 2px;
}
.explorer-head h2 {
	flex: 1;
	margin: 0;
	font: 12px "Noto Sans", "Noto Sans CJK JP", sans-serif;
}
.dots {
	display: flex;
	flex-direction: column;
	gap: 2px;
	padding: 0 9px;
}
.dots i {
	width: 3px;
	height: 3px;
	border-radius: 2px;
	background: #fff;
}
.search {
	display: flex;
	align-items: center;
	gap: 3px;
	height: 20px;
	padding-left: 3px;
	border: 1px solid #68696c;
}
.search input {
	flex: 1;
	min-width: 0;
	padding: 0;
	border: 0;
	background: none;
	color: #fff;
	font: 12px "Noto Sans CJK JP", sans-serif;
}
.search input::placeholder {
	color: #606367;
}
.tree {
	flex: 1;
	padding: 2px 0 0 11px;
	border: solid #f4f4f4;
	border-width: 2px 2px 0;
	font: 12px "DejaVu Sans", "Noto Sans CJK JP", sans-serif;
}
/* 点線でつなぐ */
.tree ul {
	margin-left: 15px;
}
.tree > li > ul {
	margin-left: 4px;
}
.tree ul li {
	background: repeating-linear-gradient(#85878a 0 1px, transparent 1px 2px) 0 0 / 1px 100% no-repeat;
}
.tree ul li:last-child {
	background-size: 1px 10px;
}
.row {
	display: flex;
	align-items: center;
	height: 20px;
}
.stub,
.line {
	width: 11px;
	height: 1px;
	background: repeating-linear-gradient(90deg, #85878a 0 1px, transparent 1px 2px);
}
.line {
	width: 13px;
}
.stub.leaf {
	width: 32px;
}
.toggle {
	width: 9px;
	height: 9px;
	background:
		linear-gradient(#234a9c, #234a9c) center / 5px 1px no-repeat,
		linear-gradient(#234a9c, #234a9c) center / 1px 5px no-repeat,
		#fff;
}
.toggle.open {
	background: linear-gradient(#234a9c, #234a9c) center / 5px 1px no-repeat, #fff;
}
.dot {
	width: 6px;
	height: 6px;
	margin: 0 4px;
	border-radius: 3px;
	background: #85868c;
}
.file {
	width: 12px;
	margin-left: 2px;
}
.label {
	margin-left: 3px;
	padding: 0 2px;
	line-height: 20px;
	white-space: nowrap;
}
.item + .label {
	margin-left: 2px;
}
.label.sel {
	background: #a0a0a0;
}
.label.off {
	color: #6c6e72;
}

/* 図面 */
.document {
	flex: 1;
	display: flex;
	flex-direction: column;
	min-width: 0;
	margin-left: 3px;
}
.doc-tabs {
	flex: none;
	display: flex;
	height: 20px;
	padding-top: 3px;
	border-bottom: 1px solid #77797c;
}
.doc-tab {
	display: flex;
	align-items: center;
	gap: 15px;
	padding: 0 4px 0 11px;
	background: #17171c;
	font: 12px "Noto Sans CJK JP", sans-serif;
}
.doc-tab.current {
	gap: 20px;
	padding: 0 7px 0 12px;
	background: none;
	font-weight: bold;
}
.doc-tab svg {
	width: 12px;
	height: 12px;
}
.doc-tab.add {
	padding: 0 7px;
}
.canvas {
	flex: 1;
	min-height: 0;
	overflow: hidden;
	background: #fff;
}
.drawing {
	display: block;
	width: 487px;
	height: 578px;
}
.credit {
	fill: #777;
	font: 4px "Liberation Mono", monospace;
}
```
